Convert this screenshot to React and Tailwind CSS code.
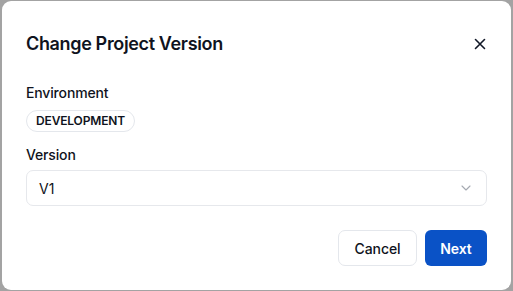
import React from "react";

export default function App() {
  return (
    <div
      className="w-[513px] h-[291px] bg-[#a3a3a3] overflow-hidden"
      style={{ fontFamily: "Inter, 'Noto Sans', sans-serif" }}
    >
      <div className="ml-[2px] mt-[1px] w-[509px] h-[289px] rounded-[9px] bg-white px-6 pt-7 pb-6 flex flex-col text-[#0f1320]">
        <div className="flex items-center justify-between h-7 mt-[1px]">
          <h2 className="text-[18px] leading-7 font-semibold tracking-[-0.35px]">Change Project Version</h2>
          <button className="w-4 h-4 flex items-center justify-center mr-[-1px]">
            <svg width="12" height="12" viewBox="0 0 12 12" fill="none" stroke="#111827" strokeWidth="1.6" strokeLinecap="round">
              <path d="M1.5 1.5L10.5 10.5M10.5 1.5L1.5 10.5" />
            </svg>
          </button>
        </div>

        <div className="mt-[25px] text-[14px] leading-5 font-medium tracking-[-0.15px]">Environment</div>
        <div className="mt-[7px] flex">
          <span className="h-[22px] px-[9px] rounded-full border border-[#e4e7ec] flex items-center text-[12px] font-semibold tracking-[-0.15px]">
            DEVELOPMENT
          </span>
        </div>

        <div className="mt-[13px] text-[14px] leading-5 font-medium tracking-[-0.15px]">Version</div>
        <div className="mt-[5px] h-[36px] rounded-[7px] border border-[#e6e8ec] flex items-center justify-between pl-3 pr-[15px]">
          <span className="text-[14px]">V1</span>
          <svg width="10" height="6" viewBox="0 0 10 6" fill="none" stroke="#a5a9b1" strokeWidth="1.1" strokeLinecap="round" strokeLinejoin="round">
            <path d="M1 1L5 5L9 1" />
          </svg>
        </div>

        <div className="mt-auto flex justify-end gap-2">
          <button className="h-[36px] w-[79px] rounded-[7px] border border-[#e4e7ec] bg-white text-[14px] font-medium tracking-[-0.1px] text-[#0f1320]">
            Cancel
          </button>
          <button className="h-[36px] w-[62px] rounded-[6px] bg-[#0a52c6] text-white text-[14px] font-semibold tracking-[-0.1px]">
            Next
          </button>
        </div>
      </div>
    </div>
  );
}
